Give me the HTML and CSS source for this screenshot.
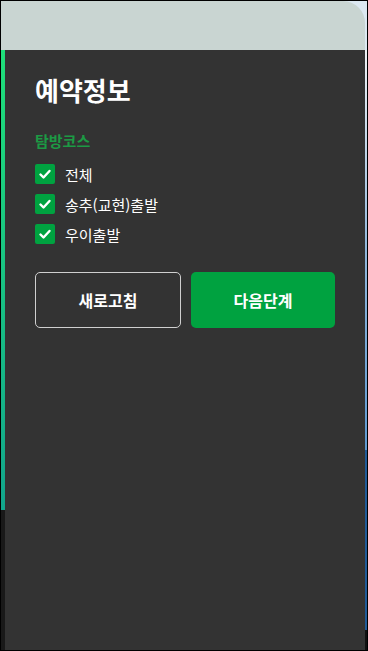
FILE: index.html
```html
<!DOCTYPE html>
<html lang="ko">
<head>
    <meta charset="UTF-8">
    <meta name="viewport" content="width=device-width, initial-scale=1.0">
    <title>예약정보</title>
    <link rel="stylesheet" href="styles.css">
</head>
<body>
    <div class="frame">
        <div class="top-bar"></div>
        <div class="body-row">
            <div class="side-strip"></div>
            <div class="panel">
                <h1>예약정보</h1>
                <h3 class="section-title">탐방코스</h3>
                <ul class="course-list">
                    <li><span class="check"><svg viewBox="0 0 20 20" width="20" height="20"><path d="M5.5 10.5l3 3 6-6.5" fill="none" stroke="#fff" stroke-width="2.4" stroke-linecap="round" stroke-linejoin="round"/></svg></span>전체</li>
                    <li><span class="check"><svg viewBox="0 0 20 20" width="20" height="20"><path d="M5.5 10.5l3 3 6-6.5" fill="none" stroke="#fff" stroke-width="2.4" stroke-linecap="round" stroke-linejoin="round"/></svg></span>송추(교현)출발</li>
                    <li><span class="check"><svg viewBox="0 0 20 20" width="20" height="20"><path d="M5.5 10.5l3 3 6-6.5" fill="none" stroke="#fff" stroke-width="2.4" stroke-linecap="round" stroke-linejoin="round"/></svg></span>우이출발</li>
                </ul>
                <div class="actions">
                    <button class="btn btn-outline">새로고침</button>
                    <button class="btn btn-primary">다음단계</button>
                </div>
            </div>
            <div class="edge-strip"></div>
        </div>
    </div>
</body>
</html>
```

FILE: styles.css
```css
html, body {
    margin: 0;
    padding: 0;
    height: 100%;
}
body {
    font-family: "Noto Sans CJK KR", "Noto Sans", sans-serif;
    background-color: #000;
}
.frame {
    box-sizing: border-box;
    height: 651px;
    border: 1px solid #000;
    display: flex;
    flex-direction: column;
    background-color: #dce8f1;
}
.top-bar {
    height: 49px;
    margin-right: 2px;
    background-color: #c9d5d2;
    border-top-right-radius: 22px;
}
.body-row {
    flex: 1;
    display: flex;
}
.side-strip {
    width: 4px;
    background: linear-gradient(#1fe07a 0%, #12a68c 100%) top / 100% 460px no-repeat, #191919;
}
.panel {
    flex: 1;
    background-color: #333;
    padding: 0 30px 0 30px;
    color: #fff;
}
.edge-strip {
    width: 2px;
    background: linear-gradient(#eef1f4 0px, #8fb6da 200px, #5d98d0 400px, #1f5a98 400px, #1f5a98 580px, #111 580px);
}
h1 {
    margin: 24px 0 0;
    font-size: 26px;
    line-height: 32px;
    font-weight: 700;
}
.section-title {
    margin: 25px 0 0;
    font-size: 15px;
    line-height: 20px;
    font-weight: 700;
    color: #1c9a44;
}
.course-list {
    list-style: none;
    margin: 8px 0 0;
    padding: 0;
}
.course-list li {
    display: flex;
    align-items: center;
    height: 30px;
    font-size: 15px;
}
.check {
    display: inline-flex;
    width: 20px;
    height: 20px;
    margin-right: 10px;
    border-radius: 2px;
    background-color: #00a240;
}
.actions {
    display: flex;
    gap: 10px;
    margin-top: 23px;
}
.btn {
    flex: 1;
    height: 56px;
    border-radius: 5px;
    font-family: inherit;
    font-size: 16px;
    font-weight: 700;
    color: #fff;
    cursor: pointer;
}
.btn-outline {
    background: transparent;
    border: 1px solid #d0d0d0;
}
.btn-primary {
    background-color: #00a240;
    border: none;
}
```
